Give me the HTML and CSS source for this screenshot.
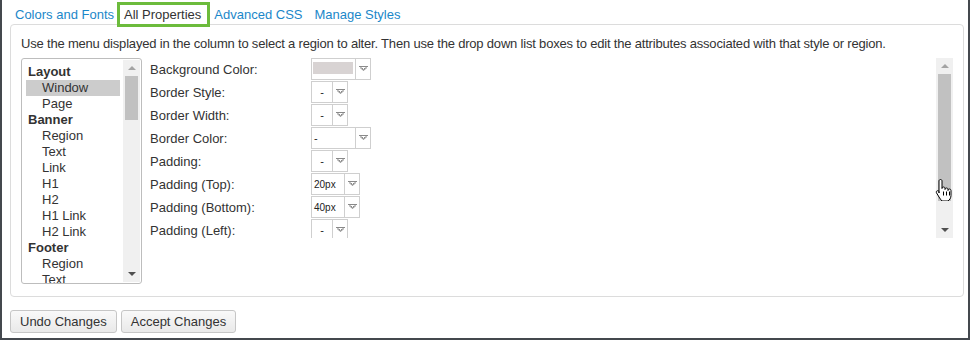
FILE: index.html
```html
<!DOCTYPE html>
<html>
<head>
<meta charset="utf-8">
<link rel="stylesheet" href="styles.css">
</head>
<body>
<div class="frame">
  <div class="tabs">
    <a class="tab t1">Colors and Fonts</a>
    <a class="tab active">All Properties</a>
    <a class="tab t3">Advanced CSS</a>
    <a class="tab t4">Manage Styles</a>
  </div>
  <div class="panel">
    <p class="desc">Use the menu displayed in the column to select a region to alter. Then use the drop down list boxes to edit the attributes associated with that style or region.</p>
    <div class="content">
      <div class="listbox">
        <div class="items">
          <div class="grp">Layout</div>
          <div class="itm sel">Window</div>
          <div class="itm">Page</div>
          <div class="grp">Banner</div>
          <div class="itm">Region</div>
          <div class="itm">Text</div>
          <div class="itm">Link</div>
          <div class="itm">H1</div>
          <div class="itm">H2</div>
          <div class="itm">H1 Link</div>
          <div class="itm">H2 Link</div>
          <div class="grp">Footer</div>
          <div class="itm">Region</div>
          <div class="itm">Text</div>
        </div>
        <div class="vscroll small">
          <div class="arrow"><span class="up"></span></div>
          <div class="track"><div class="thumb"></div></div>
          <div class="arrow"><span class="down"></span></div>
        </div>
      </div>
      <div class="props">
        <div class="grid">
          <div class="lbl">Background Color:</div>
          <div class="sel-box"><span class="val wide"><span class="swatch"></span></span><span class="arr"><svg width="9" height="6" viewBox="0 0 9 6"><path d="M0 .5h9M1 1.5l3.5 3 3.5-3M2.5 1.5l2 2 2-2" fill="none" stroke="#8a8a8a" stroke-width="1"/></svg></span></div>

          <div class="lbl">Border Style:</div>
          <div class="sel-box"><span class="val dash">-</span><span class="arr"><svg width="9" height="6" viewBox="0 0 9 6"><path d="M0 .5h9M1 1.5l3.5 3 3.5-3M2.5 1.5l2 2 2-2" fill="none" stroke="#8a8a8a" stroke-width="1"/></svg></span></div>

          <div class="lbl">Border Width:</div>
          <div class="sel-box"><span class="val dash">-</span><span class="arr"><svg width="9" height="6" viewBox="0 0 9 6"><path d="M0 .5h9M1 1.5l3.5 3 3.5-3M2.5 1.5l2 2 2-2" fill="none" stroke="#8a8a8a" stroke-width="1"/></svg></span></div>

          <div class="lbl">Border Color:</div>
          <div class="sel-box"><span class="val wide left">-</span><span class="arr"><svg width="9" height="6" viewBox="0 0 9 6"><path d="M0 .5h9M1 1.5l3.5 3 3.5-3M2.5 1.5l2 2 2-2" fill="none" stroke="#8a8a8a" stroke-width="1"/></svg></span></div>

          <div class="lbl">Padding:</div>
          <div class="sel-box"><span class="val dash">-</span><span class="arr"><svg width="9" height="6" viewBox="0 0 9 6"><path d="M0 .5h9M1 1.5l3.5 3 3.5-3M2.5 1.5l2 2 2-2" fill="none" stroke="#8a8a8a" stroke-width="1"/></svg></span></div>

          <div class="lbl">Padding (Top):</div>
          <div class="sel-box"><span class="val px">20px</span><span class="arr"><svg width="9" height="6" viewBox="0 0 9 6"><path d="M0 .5h9M1 1.5l3.5 3 3.5-3M2.5 1.5l2 2 2-2" fill="none" stroke="#8a8a8a" stroke-width="1"/></svg></span></div>

          <div class="lbl">Padding (Bottom):</div>
          <div class="sel-box"><span class="val px">40px</span><span class="arr"><svg width="9" height="6" viewBox="0 0 9 6"><path d="M0 .5h9M1 1.5l3.5 3 3.5-3M2.5 1.5l2 2 2-2" fill="none" stroke="#8a8a8a" stroke-width="1"/></svg></span></div>

          <div class="lbl">Padding (Left):</div>
          <div class="sel-box"><span class="val dash">-</span><span class="arr"><svg width="9" height="6" viewBox="0 0 9 6"><path d="M0 .5h9M1 1.5l3.5 3 3.5-3M2.5 1.5l2 2 2-2" fill="none" stroke="#8a8a8a" stroke-width="1"/></svg></span></div>
        </div>
        <div class="vscroll big">
          <div class="arrow"><span class="up"></span></div>
          <div class="track"><div class="thumb"></div></div>
          <div class="arrow"><span class="down"></span></div>
        </div>
        <svg class="cursor" width="18" height="23" viewBox="0 0 18 23">
          <path d="M5.5 1.5c1 0 1.5.7 1.5 1.5v7.5c0-.9.6-1.5 1.5-1.5s1.5.6 1.5 1.5v1c0-.9.6-1.5 1.5-1.5s1.5.6 1.5 1.5v1c0-.9.6-1.5 1.4-1.5.9 0 1.6.6 1.6 1.5v5c0 2.5-1.5 4.5-3 5.5H7c-1-1-2-2.3-3-4L1.6 15c-.6-.9-.3-1.8.4-2.1.7-.4 1.4-.1 2 .6L4 15V3c0-.8.6-1.5 1.5-1.5z" fill="#fff" stroke="#000" stroke-width="1"/>
          <path d="M8.5 13.5v4M11.5 13.5v4M14.5 13.5v4" stroke="#000" stroke-width="1"/>
        </svg>
      </div>
    </div>
  </div>
  <div class="buttons">
    <button class="btn">Undo Changes</button>
    <button class="btn">Accept Changes</button>
  </div>
</div>
</body>
</html>
```

FILE: styles.css
```css
* { box-sizing: border-box; }
html, body { margin: 0; padding: 0; background: #fff; }
body { font-family: "Liberation Sans", Arial, sans-serif; color: #333; }

.frame {
  width: 970px;
  height: 340px;
  border-left: 2px solid #44484e;
  border-right: 2px solid #44484e;
  border-bottom: 2px solid #44484e;
  background: #fff;
}

.tabs {
  display: flex;
  padding: 2px 0 0 6px;
  position: relative;
  z-index: 2;
}
.tab {
  font-size: 13px;
  line-height: 15px;
  padding: 2px 4px;
  border: 3px solid transparent;
  color: #1b87c9;
  white-space: nowrap;
}
.tab.active {
  border-color: #6cbb3c;
  background: #fff;
  color: #333;
  margin-left: -4px;
  padding-right: 6px;
}
.tab.t3 { margin-left: -3px; }
.tab.t4 { margin-left: -2px; }

.panel {
  margin: -3px 4px 0 8px;
  border: 1px solid #dcdcdc;
  border-radius: 4px;
  padding: 11px 10px 12px 10px;
  position: relative;
  z-index: 1;
}
.desc {
  margin: 0 0 7px 0;
  font-size: 13px;
  line-height: 15px;
  letter-spacing: -0.19px;
  color: #333;
  white-space: nowrap;
}
.content {
  display: flex;
  height: 226px;
}

.listbox {
  width: 121px;
  height: 226px;
  border: 1px solid #bdbdbd;
  border-radius: 3px;
  display: flex;
  overflow: hidden;
}
.items {
  flex: 1;
  padding: 5px 3px 0 4px;
  overflow: hidden;
  font-size: 13px;
}
.grp, .itm {
  line-height: 16px;
  height: 16px;
  padding-left: 2px;
  white-space: nowrap;
  color: #333;
}
.grp { font-weight: bold; }
.itm { padding-left: 16px; }
.itm.sel { background: #cccccc; }

.vscroll {
  width: 17px;
  background: #f0f0f0;
  display: flex;
  flex-direction: column;
}
.vscroll.small { margin: 1px 1px 1px 0; }
.vscroll .arrow {
  height: 16px;
  display: flex;
  align-items: center;
  justify-content: center;
}
.vscroll .track { flex: 1; }
.vscroll .thumb {
  margin: 0 2px;
  background: #c1c1c1;
}
.vscroll.small .thumb { height: 44px; }
.vscroll.big .thumb { height: 127px; }
.up {
  width: 0; height: 0;
  border-left: 4px solid transparent;
  border-right: 4px solid transparent;
  border-bottom: 4px solid #a3a3a3;
}
.down {
  width: 0; height: 0;
  border-left: 4px solid transparent;
  border-right: 4px solid transparent;
  border-top: 4px solid #505050;
}

.props {
  flex: 1;
  margin-left: 3px;
  height: 180px;
  display: flex;
  position: relative;
}
.grid {
  flex: 1;
  overflow: hidden;
  padding-left: 5px;
  display: grid;
  grid-template-columns: 161px auto;
  grid-auto-rows: 22px;
  row-gap: 1px;
  align-items: center;
  justify-items: start;
  align-content: start;
}
.lbl {
  font-size: 13px;
  line-height: 15px;
  color: #333;
  white-space: nowrap;
}
.sel-box {
  display: flex;
  height: 22px;
  border: 1px solid #cfcfcf;
  background: #fff;
}
.val {
  width: 20px;
  display: flex;
  align-items: center;
  justify-content: center;
  font-size: 11px;
  color: #222;
}
.val.wide { width: 43px; justify-content: flex-start; padding-left: 1px; }
.val.left { padding-left: 2px; }
.val.px { width: 32px; justify-content: flex-start; padding-left: 2px; font-size: 10px; }
.swatch {
  width: 40px;
  height: 12px;
  background: #d8d3d3;
  margin-top: -2px;
}
.arr {
  width: 15px;
  border-left: 1px solid #cfcfcf;
  display: flex;
  align-items: center;
  justify-content: center;
}
.arr svg { display: block; }
.vscroll.big { width: 17px; }

.cursor {
  position: absolute;
  right: 0;
  top: 120px;
}

.buttons {
  display: flex;
  gap: 4px;
  margin: 13px 0 0 8px;
}
.btn {
  font-family: "Liberation Sans", Arial, sans-serif;
  font-size: 13px;
  line-height: 17px;
  color: #333;
  padding: 2px 9px;
  border: 1px solid #c6c6c6;
  border-radius: 3px;
  background: linear-gradient(#f9f9f9, #e9e9e9);
  margin: 0;
}
```
